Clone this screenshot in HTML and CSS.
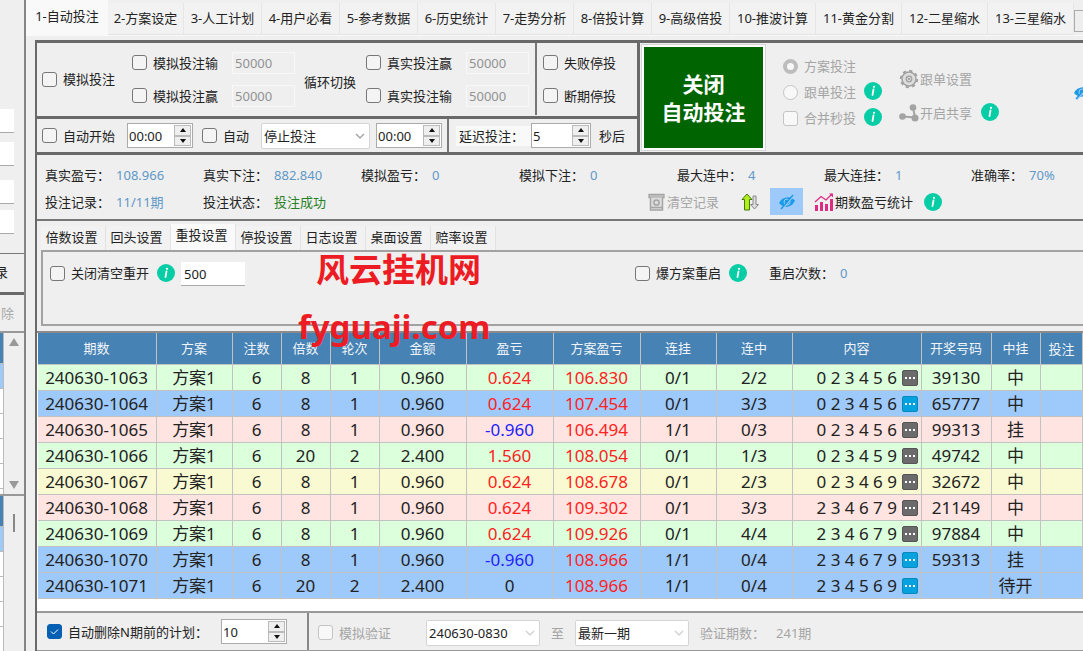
FILE: index.html
```html
<!DOCTYPE html>
<html lang="zh-CN">
<head>
<meta charset="utf-8">
<title>自动投注</title>
<link rel="stylesheet" href="styles.css">
</head>
<body>
<svg class="defs" aria-hidden="true">
  <symbol id="info" viewBox="0 0 18 18"><circle cx="9" cy="9" r="9" fill="#06cda5"/><path d="M9.500 7.500L8.500 13" stroke="#fff" stroke-width="1.800" stroke-linecap="round"/><circle cx="10" cy="4.800" r="1.100" fill="#fff"/></symbol>
  <symbol id="eye" viewBox="0 0 18 16"><path d="M1 9C4 2.500 12 1 17 6.500C14 13.500 6 15 1 9Z" fill="#1c9be6"/><circle cx="9" cy="8" r="3" fill="none" stroke="#9ec9fb" stroke-width="1"/><path d="M16 1.500L4 15.500" stroke="#9ec9fb" stroke-width="1.200"/><path d="M15 1L3 15" stroke="#1c9be6" stroke-width="1.400"/></symbol>
  <symbol id="down" viewBox="0 0 10 6"><path d="M1 1L5 5L9 1" fill="none" stroke="currentColor" stroke-width="1.200"/></symbol>
</svg>

<aside class="side">
  <div class="side-fields">
    <input class="stub" aria-label="参数一">
    <input class="stub" aria-label="参数二">
    <input class="stub" aria-label="参数三">
    <input class="stub" aria-label="参数四">
  </div>
  <div class="side-row">录</div>
  <div class="side-row dim">除</div>
  <div class="side-list tall">
    <div class="strip"><i class="head"></i><i class="sel"></i><i></i><i></i><i></i><i></i></div>
    <div class="scroll"><svg width="10" height="8"><path d="M5 0L10 8H0Z" fill="#999"/></svg><svg width="10" height="8"><path d="M5 8L10 0H0Z" fill="#999"/></svg></div>
  </div>
  <div class="side-list rest">
    <div class="strip"><i class="head"></i><i class="sel"></i><i></i><i></i><i></i><i></i></div>
    <div class="scroll thumb"><b></b></div>
  </div>
</aside>

<main class="main">
  <nav class="tabs">
    <button class="tab on">1-自动投注</button><button class="tab second">2-方案设定</button><button class="tab">3-人工计划</button><button class="tab">4-用户必看</button><button class="tab">5-参考数据</button><button class="tab">6-历史统计</button><button class="tab">7-走势分析</button><button class="tab">8-倍投计算</button><button class="tab">9-高级倍投</button><button class="tab wide">10-推波计算</button><button class="tab wide">11-黄金分割</button><button class="tab wide">12-二星缩水</button><button class="tab wide">13-三星缩水</button><button class="more" aria-label="更多"></button>
  </nav>

  <div class="page">
    <section class="top">
      <div class="settings">
        <div class="row-a">
          <div class="cycle">
            <label class="check"><input type="checkbox">模拟投注</label>
            <div class="pairs sim">
              <label class="check"><input type="checkbox">模拟投注输</label><input class="num" value="50000" disabled aria-label="模拟投注输金额">
              <label class="check"><input type="checkbox">模拟投注赢</label><input class="num" value="50000" disabled aria-label="模拟投注赢金额">
            </div>
            <span class="swap">循环切换</span>
            <div class="pairs">
              <label class="check"><input type="checkbox">真实投注赢</label><input class="num" value="50000" disabled aria-label="真实投注赢金额">
              <label class="check"><input type="checkbox">真实投注输</label><input class="num" value="50000" disabled aria-label="真实投注输金额">
            </div>
          </div>
          <div class="stops">
            <label class="check"><input type="checkbox">失败停投</label>
            <label class="check"><input type="checkbox">断期停投</label>
          </div>
        </div>
        <div class="row-b">
          <div class="timer">
            <label class="check"><input type="checkbox">自动开始</label>
            <div class="spin"><input value="00:00" aria-label="开始时间"><span><button aria-label="增加"><svg viewBox="0 0 6 4"><path d="M3 0L6 4H0Z"/></svg></button><button aria-label="减少"><svg viewBox="0 0 6 4"><path d="M3 4L6 0H0Z"/></svg></button></span></div>
            <label class="check auto"><input type="checkbox">自动</label>
            <div class="pick action"><select aria-label="动作"><option>停止投注</option></select><svg class="chev"><use href="#down"/></svg></div>
            <div class="spin stop-at"><input value="00:00" aria-label="停止时间"><span><button aria-label="增加"><svg viewBox="0 0 6 4"><path d="M3 0L6 4H0Z"/></svg></button><button aria-label="减少"><svg viewBox="0 0 6 4"><path d="M3 4L6 0H0Z"/></svg></button></span></div>
          </div>
          <div class="delay">
            <label for="delay">延迟投注：</label>
            <div class="spin small"><input id="delay" value="5"><span><button aria-label="增加"><svg viewBox="0 0 6 4"><path d="M3 0L6 4H0Z"/></svg></button><button aria-label="减少"><svg viewBox="0 0 6 4"><path d="M3 4L6 0H0Z"/></svg></button></span></div>
            <span>秒后</span>
          </div>
        </div>
      </div>
      <div class="control">
        <button class="big">关闭<br>自动投注</button>
        <div class="modes">
          <div><label class="check"><input type="radio" name="mode" checked disabled>方案投注</label></div>
          <div><label class="check"><input type="radio" name="mode" disabled>跟单投注</label><svg class="info"><use href="#info"/></svg></div>
          <div><label class="check"><input type="checkbox" disabled>合并秒投</label><svg class="info"><use href="#info"/></svg></div>
        </div>
        <div class="links">
          <button class="link" disabled><svg width="20" height="20" viewBox="0 0 20 20" fill="none" stroke="#a0a0a0"><circle cx="10" cy="10" r="7" fill="#dedede" stroke-width="1.500"/><circle cx="10" cy="10" r="8.300" stroke-width="1.800" stroke-dasharray="3.250 3.250"/><circle cx="10" cy="10" r="2.800" stroke-width="1.300"/><circle cx="10" cy="10" r=".8" fill="#888"/></svg>跟单设置</button>
          <div><button class="link" disabled><svg width="20" height="20" viewBox="0 0 20 20" fill="#a3a3a3"><path d="M3 13.500L16 14.500L14 4.500" fill="none" stroke="#a3a3a3" stroke-width="2"/><circle cx="3.500" cy="13.500" r="3.300"/><circle cx="16" cy="15" r="3.500"/><circle cx="14" cy="4.500" r="3.300"/></svg>开启共享</button><svg class="info"><use href="#info"/></svg></div>
        </div>
        <button class="peek" aria-label="隐藏"><svg width="18" height="16"><use href="#eye"/></svg></button>
      </div>
    </section>

    <section class="stats">
      <div class="figures">
        <p>真实盈亏：<b>108.966</b></p><p>真实下注：<b>882.840</b></p><p>模拟盈亏：<b>0</b></p><p>模拟下注：<b>0</b></p><p>最大连中：<b>4</b></p><p>最大连挂：<b>1</b></p><p>准确率：<b>70%</b></p>
      </div>
      <div class="figures">
        <p>投注记录：<b>11/11期</b></p><p>投注状态：<b class="ok">投注成功</b></p>
        <div class="tools">
          <button class="link" disabled><svg width="18" height="18" viewBox="0 0 18 18" fill="none" stroke="#a5a5a5"><path d="M1 1.500H16V4.500H1Z" fill="#c4c4c4" stroke-width="1.300"/><path d="M2.500 4.500V17H14.500V4.500M2.500 14.500H14.500" fill="#dcdcdc" stroke-width="1.500"/><circle cx="8.500" cy="9.500" r="2.600" stroke-width="1.500"/></svg>清空记录</button>
          <button class="sort" aria-label="排序"><svg width="18" height="18" viewBox="0 0 18 18"><path d="M13.500 16L9.500 11.500H12V3H15V11.500H17.500Z" fill="#ddd" stroke="#888"/><path d="M6 1L1 6.500H3.500V17H8.500V6.500H11Z" fill="#b4ec20" stroke="#3e7d08"/></svg></button>
          <button class="eye" aria-label="显示切换"><svg width="18" height="16"><use href="#eye"/></svg></button>
          <button class="link chart"><svg width="20" height="20" viewBox="0 0 20 20"><path d="M1 13H4V19H1ZM6 10H9V19H6ZM11 12H14V19H11ZM16 7H19V19H16Z" fill="#dd2c83"/><path d="M1 10L7 4.500L12 8L18 2" fill="none" stroke="#dd2c83" stroke-width="1.300"/><path d="M15 1.500H19V5.500Z" fill="#dd2c83"/></svg>期数盈亏统计</button>
          <svg class="info"><use href="#info"/></svg>
        </div>
      </div>
    </section>

    <section class="options">
      <nav class="subtabs"><button>倍数设置</button><button>回头设置</button><button class="on">重投设置</button><button>停投设置</button><button>日志设置</button><button>桌面设置</button><button>赔率设置</button></nav>
      <div class="panel">
        <div class="reopen">
          <label class="check"><input type="checkbox">关闭清空重开</label><svg class="info"><use href="#info"/></svg><input class="amount" value="500" aria-label="重开金额">
        </div>
        <label class="check"><input type="checkbox">爆方案重启</label><svg class="info"><use href="#info"/></svg>
        <p class="restarts">重启次数：<b>0</b></p>
      </div>
      <div class="mark"><strong>风云挂机网</strong><strong>fyguaji.com</strong></div>
    </section>

    <section class="grid">
      <table>
        <colgroup><col class="c119"><col class="c76"><col class="c49"><col class="c49"><col class="c49"><col class="c87"><col class="c87"><col class="c87"><col class="c76"><col class="c76"><col class="c129"><col class="c70"><col class="c49"><col></colgroup>
        <thead><tr><th>期数</th><th>方案</th><th>注数</th><th>倍数</th><th>轮次</th><th>金额</th><th>盈亏</th><th>方案盈亏</th><th>连挂</th><th>连中</th><th>内容</th><th>开奖号码</th><th>中挂</th><th>投注</th></tr></thead>
        <tbody>
          <tr class="green"><td>240630-1063</td><td>方案1</td><td>6</td><td>8</td><td>1</td><td>0.960</td><td class="up">0.624</td><td class="up">106.830</td><td>0/1</td><td>2/2</td><td class="code">0 2 3 4 5 6<button aria-label="详情"></button></td><td>39130</td><td>中</td><td></td></tr>
          <tr class="blue"><td>240630-1064</td><td>方案1</td><td>6</td><td>8</td><td>1</td><td>0.960</td><td class="up">0.624</td><td class="up">107.454</td><td>0/1</td><td>3/3</td><td class="code">0 2 3 4 5 6<button aria-label="详情"></button></td><td>65777</td><td>中</td><td></td></tr>
          <tr class="pink"><td>240630-1065</td><td>方案1</td><td>6</td><td>8</td><td>1</td><td>0.960</td><td class="down">-0.960</td><td class="up">106.494</td><td>1/1</td><td>0/3</td><td class="code">0 2 3 4 5 6<button aria-label="详情"></button></td><td>99313</td><td>挂</td><td></td></tr>
          <tr class="green"><td>240630-1066</td><td>方案1</td><td>6</td><td>20</td><td>2</td><td>2.400</td><td class="up">1.560</td><td class="up">108.054</td><td>0/1</td><td>1/3</td><td class="code">0 2 3 4 5 9<button aria-label="详情"></button></td><td>49742</td><td>中</td><td></td></tr>
          <tr class="yellow"><td>240630-1067</td><td>方案1</td><td>6</td><td>8</td><td>1</td><td>0.960</td><td class="up">0.624</td><td class="up">108.678</td><td>0/1</td><td>2/3</td><td class="code">0 2 3 4 6 9<button aria-label="详情"></button></td><td>32672</td><td>中</td><td></td></tr>
          <tr class="pink"><td>240630-1068</td><td>方案1</td><td>6</td><td>8</td><td>1</td><td>0.960</td><td class="up">0.624</td><td class="up">109.302</td><td>0/1</td><td>3/3</td><td class="code">2 3 4 6 7 9<button aria-label="详情"></button></td><td>21149</td><td>中</td><td></td></tr>
          <tr class="green"><td>240630-1069</td><td>方案1</td><td>6</td><td>8</td><td>1</td><td>0.960</td><td class="up">0.624</td><td class="up">109.926</td><td>0/1</td><td>4/4</td><td class="code">2 3 4 6 7 9<button aria-label="详情"></button></td><td>97884</td><td>中</td><td></td></tr>
          <tr class="blue"><td>240630-1070</td><td>方案1</td><td>6</td><td>8</td><td>1</td><td>0.960</td><td class="down">-0.960</td><td class="up">108.966</td><td>1/1</td><td>0/4</td><td class="code">2 3 4 6 7 9<button aria-label="详情"></button></td><td>59313</td><td>挂</td><td></td></tr>
          <tr class="blue"><td>240630-1071</td><td>方案1</td><td>6</td><td>20</td><td>2</td><td>2.400</td><td>0</td><td class="up">108.966</td><td>1/1</td><td>0/4</td><td class="code">2 3 4 5 6 9<button aria-label="详情"></button></td><td></td><td>待开</td><td></td></tr>
        </tbody>
      </table>
    </section>

    <footer class="foot">
      <div class="purge">
        <label class="check"><input type="checkbox" checked>自动删除N期前的计划：</label>
        <div class="spin"><input value="10" aria-label="保留期数"><span><button aria-label="增加"><svg viewBox="0 0 6 4"><path d="M3 0L6 4H0Z"/></svg></button><button aria-label="减少"><svg viewBox="0 0 6 4"><path d="M3 4L6 0H0Z"/></svg></button></span></div>
      </div>
      <div class="verify">
        <label class="check"><input type="checkbox" disabled>模拟验证</label>
        <div class="pick from"><select aria-label="起始期"><option>240630-0830</option></select><svg class="chev"><use href="#down"/></svg></div>
        <span>至</span>
        <div class="pick"><select aria-label="结束期"><option>最新一期</option></select><svg class="chev"><use href="#down"/></svg></div>
        <span>验证期数：</span><span>241期</span>
      </div>
    </footer>
  </div>
</main>
</body>
</html>
```
FILE: styles.css
```css
* { box-sizing: border-box; }
body {
  margin: 0;
  display: flex;
  min-height: 100vh;
  overflow: hidden;
  background: #efefef;
  color: #222;
  font: 13px/20px "Noto Sans", "Noto Sans CJK SC", sans-serif;
  white-space: nowrap;
}
button, input, select { font: inherit; color: inherit; margin: 0; }
button { border: 0; padding: 0; background: none; }
p { margin: 0; }
svg { display: block; flex: none; }
.defs { position: absolute; width: 0; height: 0; }

/* left window edge */
.side {
  flex: none;
  width: 26px;
  display: flex;
  flex-direction: column;
  border-right: 2px solid #858585;
}
.side-fields { height: 253px; padding-top: 109px; display: grid; grid-template-rows: 33px 38px 30px 24px; align-content: start; align-items: start; }
.stub { width: 14px; height: 24px; border: 0; border-bottom: 1px solid #aaa; background: #fff; padding: 0; }
.side-row { height: 39px; overflow: hidden; border-top: 1px solid #777; padding-top: 8px; direction: rtl; width: 24px; padding-right: 16px; }
.side-row.dim { border-top: 3px solid #696969; color: #aaa; padding-right: 10px; }
.side-list { display: flex; border-top: 2px solid #999; }
.side-list.tall { height: 163px; }
.side-list.rest { flex: 1; height: 0; overflow: hidden; }
.strip { width: 4px; overflow: hidden; background: #fff; border-right: 1px solid #bbb; }
.strip i { display: block; height: 25px; border-bottom: 1px solid #bbb; }
.strip .head { height: 31px; background: #4682b4; }
.strip .sel { background: #9ec9fb; }
.scroll { flex: 1; display: flex; flex-direction: column; align-items: center; justify-content: space-between; padding: 5px 0; }
.thumb { padding-top: 18px; }
.thumb b { width: 2px; height: 18px; background: #888; }

/* main tabs */
.main { flex: 1; min-width: 0; display: flex; flex-direction: column; }
.tabs { display: flex; align-items: flex-end; height: 36px; overflow: hidden; border-bottom: 1px solid #f8f8f8; }
.tab { flex: none; width: 78px; height: 32px; padding-bottom: 1px; background: #f2f2f2; border-right: 1px solid #e6e6e6; border-bottom: 1px solid #e4e4e4; }
.tab.on { width: 82px; height: 35px; padding-bottom: 3px; background: #f9f9f9; border: 0; }
.tab.second { width: 76px; }
.tab.wide { width: 86px; }
.more { flex: none; width: 26px; height: 22px; margin-bottom: 3px; border: 1px solid #aaa; background: #eee; }
.page { flex: 1; display: flex; flex-direction: column; margin-top: 4px; margin-left: 9px; border-left: 2px solid #696969; }

/* shared controls */
.check { display: flex; align-items: center; gap: 6px; }
.check input {
  appearance: none;
  flex: none;
  width: 15px;
  height: 15px;
  border: 1px solid #777;
  border-radius: 3px;
  background: #f4f4f4;
}
.check input[type=radio] { border-radius: 50%; }
.check input:disabled { border-color: #c4c4c4; background: #f8f8f8; }
.check:has(input:disabled) { color: #a5a5a5; }
.check input[type=radio]:checked { border: 4px solid #bdbdbd; }
.check input[type=checkbox]:checked {
  border-color: #0560b4;
  background: #0560b4 url("data:image/svg+xml,%3Csvg xmlns='http://www.w3.org/2000/svg' viewBox='0 0 13 13'%3E%3Cpath d='M3 6.500L5.500 9L10 4.500' fill='none' stroke='white'/%3E%3C/svg%3E");
}
.num { width: 63px; height: 22px; border: 1px solid #f8f8f8; background: #efefef; color: #929292; padding: 0 2px; }
.spin { display: flex; flex: none; width: 66px; height: 25px; border: 1px solid #ababab; background: #fff; }
.spin input { flex: 1; width: 0; border: 0; padding: 0 1px; background: none; }
.spin span { display: grid; grid-template-rows: 1fr 1fr; width: 17px; margin: 1px; }
.spin button { display: grid; place-items: center; border: 1px solid #bbb; background: #efefef; }
.spin button svg { width: 6px; height: 4px; fill: #111; }
.pick { position: relative; width: 114px; height: 26px; }
.pick select { appearance: none; width: 100%; height: 100%; border: 1px solid #d5d5d5; border-radius: 2px; background: #fff; padding: 0 2px; }
.chev { position: absolute; right: 5px; top: 10px; width: 10px; height: 6px; color: #999; pointer-events: none; }
.info { width: 18px; height: 18px; }
.link { display: flex; align-items: center; gap: 1px; }
.link:disabled { color: #a5a5a5; }

/* betting settings */
.top { display: flex; border-top: 3px solid #696969; border-bottom: 3px solid #696969; height: 115px; }
.settings { flex: none; width: 603px; display: flex; flex-direction: column; border-right: 3px solid #696969; }
.row-a { display: flex; height: 76px; padding-bottom: 1px; border-bottom: 3px solid #696969; }
.cycle { width: 500px; display: flex; align-items: center; padding-left: 5px; border-right: 2px solid #777; }
.pairs { display: grid; grid-template-columns: 100px 63px; grid-auto-rows: 22px; row-gap: 11px; align-items: center; }
.pairs.sim { margin-left: 17px; }
.swap { margin: 6px 10px 0 9px; }
.stops { display: flex; flex-direction: column; justify-content: center; gap: 13px; padding-left: 6px; }
.row-b { flex: 1; display: flex; }
.timer { width: 412px; display: flex; align-items: center; padding-left: 5px; border-right: 2px solid #777; }
.timer .spin { margin-left: 12px; }
.auto { margin: 0 12px 0 9px; }
.action { width: 109px; }
.timer .stop-at { margin-left: 6px; }
.delay { display: flex; align-items: center; padding-left: 7px; }
.delay label { width: 75px; padding-left: 3px; background: #f9f9f9; }
.delay .spin { width: 60px; margin-right: 8px; }

.control { flex: 1; min-width: 0; display: flex; overflow: hidden; padding: 2px 0 0 2px; }
.big { flex: none; width: 123px; height: 105px; border: 2px solid #fff; outline: 1px solid #d5d5d5; background: #006400; color: #fff; font-size: 21px; font-weight: 700; line-height: 28px; }
.modes { margin-left: 18px; padding-top: 11px; display: flex; flex-direction: column; gap: 6px; }
.modes div { display: flex; gap: 8px; }
.links { margin: 24px 0 0 17px; display: flex; flex-direction: column; gap: 14px; }
.links div { display: flex; gap: 9px; }
.peek { margin: 0 -8px 14px auto; }

/* statistics */
.stats { height: 66px; border-bottom: 2px solid #777; padding: 6px 0 0 8px; }
.figures { display: flex; height: 27px; align-items: center; }
.figures p { flex: none; width: 158px; }
.figures p:nth-child(5), .figures p:nth-child(6) { width: 147px; }
.figures b, .restarts b { font-weight: 400; color: #5f98c8; margin-left: 6px; }
.figures .ok { color: #278227; }
.tools { display: flex; align-items: center; margin-left: 287px; }
.sort { margin: 0 11px 0 22px; }
.eye { width: 33px; height: 27px; background: #9ec9fb; display: grid; place-items: center; }
.chart { margin: 0 11px; }

/* option tabs */
.options { position: relative; height: 112px; padding: 3px 0 0 4px; border-bottom: 2px solid #8b8b8b; }
.subtabs { display: flex; align-items: flex-end; height: 26px; }
.subtabs button { width: 65px; height: 24px; padding: 0 3px 2px 0; border-right: 1px solid #e2e2e2; background: #f2f2f2; }
.subtabs .on { height: 26px; padding-bottom: 4px; background: #fafafa; }
.panel { display: flex; align-items: flex-start; height: 76px; padding: 10px 0 0 7px; border: 2px solid #a2a2a2; border-right: 0; }
.panel .check, .restarts { height: 22px; }
.panel .info { margin: 2px 0 0 8px; }
.reopen { display: flex; width: 585px; }
.amount { width: 64px; height: 24px; margin-left: 6px; border: 0; border-bottom: 1px solid #aaa; background: #fff; padding: 0 3px; }
.restarts { margin-left: 22px; line-height: 22px; }
.mark { position: absolute; left: 261px; top: 24px; display: grid; z-index: 1; pointer-events: none; color: #ed1c24; font-size: 33px; line-height: 50px; row-gap: 7px; }
.mark strong:first-child { padding-left: 18px; }

/* plan table */
.grid { background: #fff; border-bottom: 2px solid #999; padding: 0 0 12px 1px; overflow: hidden; }
table { width: 100%; table-layout: fixed; border-collapse: separate; border-spacing: 0; }
.c119 { width: 119px; } .c129 { width: 129px; } .c87 { width: 87px; } .c76 { width: 76px; } .c70 { width: 70px; } .c49 { width: 49px; }
th, td { padding: 0 1px 0 0; border-right: 1px solid #c2c2c2; border-bottom: 1px solid #c2c2c2; text-align: center; }
th { height: 32px; padding-bottom: 1px; background: #4682b4; color: #f1f5f9; font-weight: 400; }
th:last-child { padding: 0; }
td { height: 26px; font-size: 17px; line-height: 25px; }
.green { background: #dcffdc; }
.blue { background: #9ec9fb; }
.pink { background: #ffe4e1; }
.yellow { background: #fafad2; }
.up { color: #f22; }
.down { color: #22f; }
td.code { text-align: right; padding-right: 3px; }
.code button { width: 16px; height: 16px; margin-left: 5px; vertical-align: -1px; border: 1px solid #555; border-radius: 2px; background: radial-gradient(circle, #fff 1px, transparent 1px) 1px 0 / 4px 14px repeat-x, #6b6b6b; }
.blue .code button { border-color: #0b87ba; background-color: #05a2df; }

/* footer */
.foot { display: flex; height: 38px; border-bottom: 1px solid #999; }
.purge { width: 272px; display: flex; align-items: center; justify-content: space-between; padding: 0 20px 0 10px; border-right: 2px solid #888; }
.verify { flex: 1; display: flex; align-items: center; gap: 11px; padding: 2px 0 0 9px; color: #a5a5a5; }
.verify select { color: #222; opacity: 1; }
.verify .chev { color: #ccc; }
.verify .from { margin-left: 24px; }
```
